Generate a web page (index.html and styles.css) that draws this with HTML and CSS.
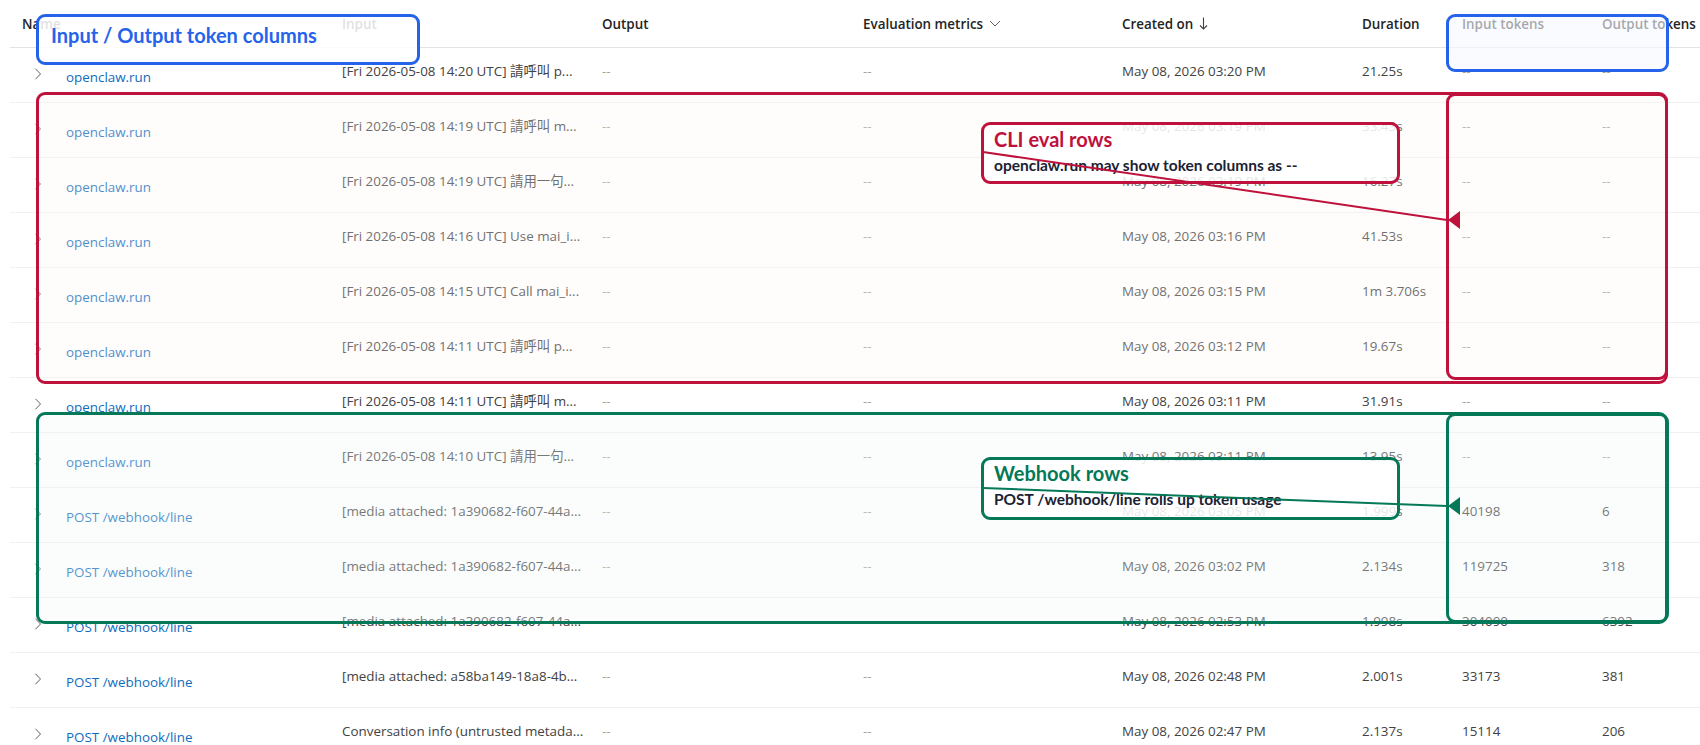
FILE: index.html
```html
<!DOCTYPE html>
<html lang="en">
<head>
<meta charset="utf-8">
<title>Traces</title>
<link rel="stylesheet" href="styles.css">
</head>
<body>
<div class="page">
  <div class="table">
    <div class="row head">
      <div class="cell">Name</div>
      <div class="cell">Input</div>
      <div class="cell">Output</div>
      <div class="cell hicon">Evaluation metrics
        <svg class="i-down" width="12" height="7" viewBox="0 0 12 7"><polyline points="1,1 6,6 11,1" fill="none" stroke="#616161" stroke-width="1"/></svg>
      </div>
      <div class="cell hicon">Created on
        <svg class="i-sort" width="9" height="13" viewBox="0 0 9 13"><line x1="4.5" y1="0.5" x2="4.5" y2="12" stroke="#424242" stroke-width="1.1"/><polyline points="1,8.5 4.5,12 8,8.5" fill="none" stroke="#424242" stroke-width="1.1"/></svg>
      </div>
      <div class="cell">Duration</div>
      <div class="cell">Input tokens</div>
      <div class="cell">Output tokens</div>
    </div>

    <div class="row">
      <div class="cell name"><svg class="chev" width="8" height="12" viewBox="0 0 8 12"><polyline points="1.5,0.8 6.5,6 1.5,11.2" fill="none" stroke="#616161" stroke-width="1"/></svg><a class="link">openclaw.run</a></div>
      <div class="cell">[Fri 2026-05-08 14:20 UTC] 請呼叫 p...</div>
      <div class="cell dim">--</div><div class="cell dim">--</div>
      <div class="cell">May 08, 2026 03:20 PM</div><div class="cell">21.25s</div>
      <div class="cell dim">--</div><div class="cell dim">--</div>
    </div>
    <div class="row">
      <div class="cell name"><svg class="chev" width="8" height="12" viewBox="0 0 8 12"><polyline points="1.5,0.8 6.5,6 1.5,11.2" fill="none" stroke="#616161" stroke-width="1"/></svg><a class="link">openclaw.run</a></div>
      <div class="cell">[Fri 2026-05-08 14:19 UTC] 請呼叫 m...</div>
      <div class="cell dim">--</div><div class="cell dim">--</div>
      <div class="cell">May 08, 2026 03:19 PM</div><div class="cell">33.43s</div>
      <div class="cell dim">--</div><div class="cell dim">--</div>
    </div>
    <div class="row">
      <div class="cell name"><svg class="chev" width="8" height="12" viewBox="0 0 8 12"><polyline points="1.5,0.8 6.5,6 1.5,11.2" fill="none" stroke="#616161" stroke-width="1"/></svg><a class="link">openclaw.run</a></div>
      <div class="cell">[Fri 2026-05-08 14:19 UTC] 請用一句...</div>
      <div class="cell dim">--</div><div class="cell dim">--</div>
      <div class="cell">May 08, 2026 03:19 PM</div><div class="cell">16.27s</div>
      <div class="cell dim">--</div><div class="cell dim">--</div>
    </div>
    <div class="row">
      <div class="cell name"><svg class="chev" width="8" height="12" viewBox="0 0 8 12"><polyline points="1.5,0.8 6.5,6 1.5,11.2" fill="none" stroke="#616161" stroke-width="1"/></svg><a class="link">openclaw.run</a></div>
      <div class="cell">[Fri 2026-05-08 14:16 UTC] Use mai_i...</div>
      <div class="cell dim">--</div><div class="cell dim">--</div>
      <div class="cell">May 08, 2026 03:16 PM</div><div class="cell">41.53s</div>
      <div class="cell dim">--</div><div class="cell dim">--</div>
    </div>
    <div class="row">
      <div class="cell name"><svg class="chev" width="8" height="12" viewBox="0 0 8 12"><polyline points="1.5,0.8 6.5,6 1.5,11.2" fill="none" stroke="#616161" stroke-width="1"/></svg><a class="link">openclaw.run</a></div>
      <div class="cell">[Fri 2026-05-08 14:15 UTC] Call mai_i...</div>
      <div class="cell dim">--</div><div class="cell dim">--</div>
      <div class="cell">May 08, 2026 03:15 PM</div><div class="cell">1m 3.706s</div>
      <div class="cell dim">--</div><div class="cell dim">--</div>
    </div>
    <div class="row">
      <div class="cell name"><svg class="chev" width="8" height="12" viewBox="0 0 8 12"><polyline points="1.5,0.8 6.5,6 1.5,11.2" fill="none" stroke="#616161" stroke-width="1"/></svg><a class="link">openclaw.run</a></div>
      <div class="cell">[Fri 2026-05-08 14:11 UTC] 請呼叫 p...</div>
      <div class="cell dim">--</div><div class="cell dim">--</div>
      <div class="cell">May 08, 2026 03:12 PM</div><div class="cell">19.67s</div>
      <div class="cell dim">--</div><div class="cell dim">--</div>
    </div>
    <div class="row">
      <div class="cell name"><svg class="chev" width="8" height="12" viewBox="0 0 8 12"><polyline points="1.5,0.8 6.5,6 1.5,11.2" fill="none" stroke="#616161" stroke-width="1"/></svg><a class="link">openclaw.run</a></div>
      <div class="cell">[Fri 2026-05-08 14:11 UTC] 請呼叫 m...</div>
      <div class="cell dim">--</div><div class="cell dim">--</div>
      <div class="cell">May 08, 2026 03:11 PM</div><div class="cell">31.91s</div>
      <div class="cell dim">--</div><div class="cell dim">--</div>
    </div>
    <div class="row">
      <div class="cell name"><svg class="chev" width="8" height="12" viewBox="0 0 8 12"><polyline points="1.5,0.8 6.5,6 1.5,11.2" fill="none" stroke="#616161" stroke-width="1"/></svg><a class="link">openclaw.run</a></div>
      <div class="cell">[Fri 2026-05-08 14:10 UTC] 請用一句...</div>
      <div class="cell dim">--</div><div class="cell dim">--</div>
      <div class="cell">May 08, 2026 03:11 PM</div><div class="cell">13.95s</div>
      <div class="cell dim">--</div><div class="cell dim">--</div>
    </div>
    <div class="row">
      <div class="cell name"><svg class="chev" width="8" height="12" viewBox="0 0 8 12"><polyline points="1.5,0.8 6.5,6 1.5,11.2" fill="none" stroke="#616161" stroke-width="1"/></svg><a class="link">POST /webhook/line</a></div>
      <div class="cell">[media attached: 1a390682-f607-44a...</div>
      <div class="cell dim">--</div><div class="cell dim">--</div>
      <div class="cell">May 08, 2026 03:05 PM</div><div class="cell">1.999s</div>
      <div class="cell">40198</div><div class="cell">6</div>
    </div>
    <div class="row">
      <div class="cell name"><svg class="chev" width="8" height="12" viewBox="0 0 8 12"><polyline points="1.5,0.8 6.5,6 1.5,11.2" fill="none" stroke="#616161" stroke-width="1"/></svg><a class="link">POST /webhook/line</a></div>
      <div class="cell">[media attached: 1a390682-f607-44a...</div>
      <div class="cell dim">--</div><div class="cell dim">--</div>
      <div class="cell">May 08, 2026 03:02 PM</div><div class="cell">2.134s</div>
      <div class="cell">119725</div><div class="cell">318</div>
    </div>
    <div class="row">
      <div class="cell name"><svg class="chev" width="8" height="12" viewBox="0 0 8 12"><polyline points="1.5,0.8 6.5,6 1.5,11.2" fill="none" stroke="#616161" stroke-width="1"/></svg><a class="link">POST /webhook/line</a></div>
      <div class="cell">[media attached: 1a390682-f607-44a...</div>
      <div class="cell dim">--</div><div class="cell dim">--</div>
      <div class="cell">May 08, 2026 02:53 PM</div><div class="cell">1.998s</div>
      <div class="cell">304090</div><div class="cell">6392</div>
    </div>
    <div class="row">
      <div class="cell name"><svg class="chev" width="8" height="12" viewBox="0 0 8 12"><polyline points="1.5,0.8 6.5,6 1.5,11.2" fill="none" stroke="#616161" stroke-width="1"/></svg><a class="link">POST /webhook/line</a></div>
      <div class="cell">[media attached: a58ba149-18a8-4b...</div>
      <div class="cell dim">--</div><div class="cell dim">--</div>
      <div class="cell">May 08, 2026 02:48 PM</div><div class="cell">2.001s</div>
      <div class="cell">33173</div><div class="cell">381</div>
    </div>
    <div class="row">
      <div class="cell name"><svg class="chev" width="8" height="12" viewBox="0 0 8 12"><polyline points="1.5,0.8 6.5,6 1.5,11.2" fill="none" stroke="#616161" stroke-width="1"/></svg><a class="link">POST /webhook/line</a></div>
      <div class="cell">Conversation info (untrusted metada...</div>
      <div class="cell dim">--</div><div class="cell dim">--</div>
      <div class="cell">May 08, 2026 02:47 PM</div><div class="cell">2.137s</div>
      <div class="cell">15114</div><div class="cell">206</div>
    </div>
  </div>

  <div class="zone zone-blue-tokens"></div>
  <div class="zone zone-red"></div>
  <div class="zone zone-red-tokens"></div>
  <div class="zone zone-green"></div>
  <div class="zone zone-green-tokens"></div>

  <div class="note note-blue">
    <div class="note-title">Input / Output token columns</div>
  </div>
  <div class="note note-red">
    <div class="note-title">CLI eval rows</div>
    <div class="note-sub">openclaw.run may show token columns as --</div>
  </div>
  <div class="note note-green">
    <div class="note-title">Webhook rows</div>
    <div class="note-sub">POST /webhook/line rolls up token usage</div>
  </div>

  <svg class="arrows" width="1700" height="745" viewBox="0 0 1700 745">
    <line x1="983" y1="152" x2="1447" y2="220" stroke="#be123c" stroke-width="2"/>
    <polygon points="1448,220 1460,211 1460,229" fill="#be123c"/>
    <line x1="983" y1="488" x2="1447" y2="506" stroke="#047857" stroke-width="2"/>
    <polygon points="1448,506 1460,497 1460,515" fill="#047857"/>
  </svg>
</div>
</body>
</html>
```

FILE: styles.css
```css
html, body {
  margin: 0;
  padding: 0;
  background: #ffffff;
}

body {
  width: 1700px;
  height: 745px;
  overflow: hidden;
  font-family: "Open Sans", "Noto Sans CJK TC", sans-serif;
  font-size: 13.4px;
  color: #424242;
}

.page {
  position: relative;
  width: 1700px;
  height: 745px;
  overflow: hidden;
}

.table {
  margin-left: 10px;
  width: 1760px;
}

.row {
  display: grid;
  grid-template-columns: 320px 260px 261px 259px 240px 100px 140px 180px;
  height: 54px;
  border-bottom: 1px solid #f0f0f0;
}

.head {
  height: 47px;
  border-bottom-color: #e3e3e3;
  align-items: center;
  font-weight: 600;
  color: #242424;
}

.cell {
  padding-left: 12px;
  padding-top: 13px;
  line-height: 20px;
  white-space: nowrap;
  overflow: hidden;
}

.head .cell {
  padding-top: 0;
}

.hicon {
  display: flex;
  align-items: center;
}

.i-down {
  margin-left: 6px;
}

.i-sort {
  margin-left: 6px;
}

.name {
  display: flex;
  align-items: flex-start;
  padding-left: 24px;
  padding-top: 19px;
}

.chev {
  flex: none;
  margin-top: 1px;
  margin-right: 24px;
}

.link {
  color: #0f6cbd;
  text-decoration: none;
}

.dim {
  color: #a3a3a3;
}

/* annotation overlays */
.zone {
  position: absolute;
  box-sizing: border-box;
  border: 3px solid;
  border-radius: 9px;
}

.zone-blue-tokens {
  left: 1446px;
  top: 14px;
  width: 223px;
  height: 58px;
  border-color: #2563eb;
  background: rgba(246, 249, 255, 0.62);
}

.zone-red {
  left: 36px;
  top: 92px;
  width: 1632px;
  height: 292px;
  border-color: #be123c;
  background: rgba(250, 246, 242, 0.26);
}

.zone-red-tokens {
  left: 1446px;
  top: 93px;
  width: 222px;
  height: 287px;
  border-color: #be123c;
}

.zone-green {
  left: 36px;
  top: 412px;
  width: 1632px;
  height: 212px;
  border-color: #047857;
  background: rgba(242, 250, 247, 0.3);
}

.zone-green-tokens {
  left: 1446px;
  top: 413px;
  width: 223px;
  height: 210px;
  border-color: #047857;
}

.note {
  position: absolute;
  box-sizing: border-box;
  border: 3px solid;
  border-radius: 9px;
  background: rgba(255, 255, 255, 0.82);
  font-family: Lato, "Noto Sans", sans-serif;
  font-weight: 700;
  padding: 2px 10px 0 10px;
}

.note-title {
  font-size: 20px;
  line-height: 24px;
}

.note-sub {
  margin-top: 4px;
  font-size: 15.5px;
  line-height: 20px;
  color: #1b2233;
}

.note-blue {
  left: 36px;
  top: 14px;
  width: 384px;
  height: 51px;
  border-color: #2563eb;
  color: #2563eb;
  padding: 6px 12px 0 12px;
  background: rgba(255, 255, 255, 0.86);
}

.note-red {
  left: 981px;
  top: 122px;
  width: 419px;
  height: 62px;
  border-color: #be123c;
  color: #be123c;
}

.note-green {
  left: 981px;
  top: 457px;
  width: 419px;
  height: 63px;
  border-color: #047857;
  color: #047857;
  padding-top: 1px;
}

.arrows {
  position: absolute;
  left: 0;
  top: 0;
}
```
